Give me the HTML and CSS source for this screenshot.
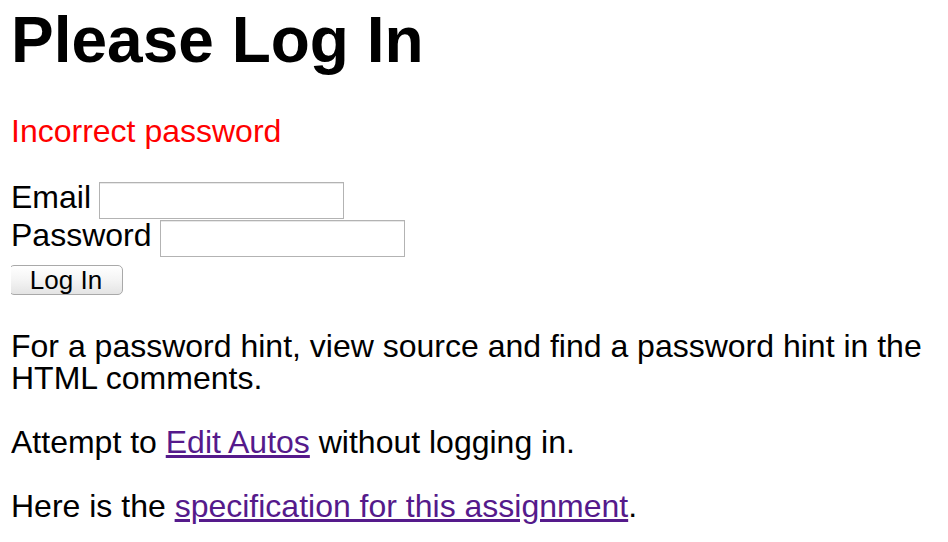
FILE: index.html
```html
<!DOCTYPE html>
<html>
<head>
<meta charset="utf-8">
<title>Please Log In</title>
<link rel="stylesheet" href="styles.css">
</head>
<body>
<h1 class="title">Please Log In</h1>
<p class="error">Incorrect password</p>
<form class="login" method="post">
  <div class="row">
    <label class="label" for="email">Email</label>
    <input class="field" type="text" id="email" name="email">
  </div>
  <div class="row">
    <label class="label" for="pass">Password</label>
    <input class="field" type="password" id="pass" name="pass">
  </div>
  <div class="actions">
    <button class="btn" type="submit">Log In</button>
  </div>
</form>
<p class="text">For a password hint, view source and find a password hint in the HTML comments.</p>
<p class="text">Attempt to <a class="link" href="#">Edit Autos</a> without logging in.</p>
<p class="text">Here is the <a class="link" href="#">specification for this assignment</a>.</p>
</body>
</html>
```
FILE: styles.css
```css
html, body {
  background: #fff;
}
body {
  margin: 8px 8px 8px 11px;
  font-family: "Liberation Sans", Arial, Helvetica, sans-serif;
  font-size: 32px;
  line-height: 32px;
  color: #000;
}
.title {
  font-size: 64px;
  line-height: 64px;
  font-weight: bold;
  margin: 0 0 43px 0;
}
.error {
  color: #ff0000;
  margin: 0 0 32px 0;
}
.login {
  margin: 0 0 31px 0;
}
.row {
  display: flex;
  align-items: flex-start;
  gap: 8px;
  height: 38px;
}
.label {
  margin-top: 2px;
  line-height: 32px;
}
.field {
  box-sizing: border-box;
  width: 245px;
  height: 37px;
  margin: 3px 0 0 0;
  border: 1px solid #b3b3b3;
  box-shadow: inset 0 1px 0 #e8e8e8;
  background: #fff;
  padding: 0 4px;
  font: 26px "Liberation Sans", Arial, sans-serif;
}
.actions {
  padding: 7px 0 4px 0;
  margin-left: -2px;
}
.btn {
  box-sizing: border-box;
  width: 114px;
  height: 30px;
  margin: 0;
  padding: 0;
  border: 1px solid #a9a9a9;
  border-radius: 5px;
  background: linear-gradient(#ffffff, #f4f4f4 50%, #e4e4e4);
  font: 26px/26px "Liberation Sans", Arial, sans-serif;
  color: #000;
}
.text {
  margin: 0 0 32px 0;
}
.link {
  color: #551a8b;
  text-decoration: underline;
}
```
